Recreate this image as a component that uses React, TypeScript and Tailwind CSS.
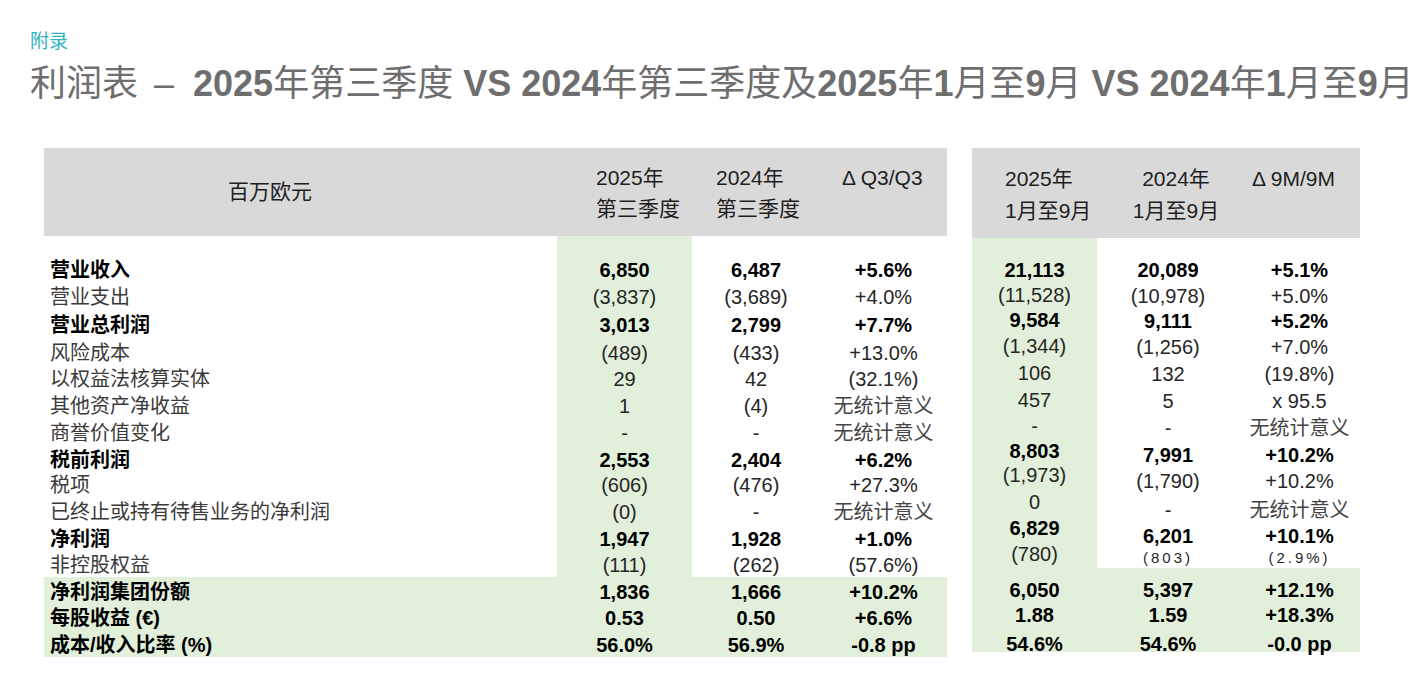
import { clsx } from "clsx";

type Kind = "b" | "r" | "s";
type Val = [string, Kind?];

type LeftRow = {
  label: string;
  bold?: boolean;
  h: string;
  vals: [string, string, string];
};

const LEFT_ROWS: LeftRow[] = [
  { label: "营业收入", bold: true, h: "h-[27px]", vals: ["6,850", "6,487", "+5.6%"] },
  { label: "营业支出", h: "h-[28px]", vals: ["(3,837)", "(3,689)", "+4.0%"] },
  { label: "营业总利润", bold: true, h: "h-[28px]", vals: ["3,013", "2,799", "+7.7%"] },
  { label: "风险成本", h: "h-[26px]", vals: ["(489)", "(433)", "+13.0%"] },
  { label: "以权益法核算实体", h: "h-[27px]", vals: ["29", "42", "(32.1%)"] },
  { label: "其他资产净收益", h: "h-[27px]", vals: ["1", "(4)", "无统计意义"] },
  { label: "商誉价值变化", h: "h-[27px]", vals: ["-", "-", "无统计意义"] },
  { label: "税前利润", bold: true, h: "h-[25px]", vals: ["2,553", "2,404", "+6.2%"] },
  { label: "税项", h: "h-[27px]", vals: ["(606)", "(476)", "+27.3%"] },
  { label: "已终止或持有待售业务的净利润", h: "h-[27px]", vals: ["(0)", "-", "无统计意义"] },
  { label: "净利润", bold: true, h: "h-[26px]", vals: ["1,947", "1,928", "+1.0%"] },
  { label: "非控股权益", h: "h-[27px]", vals: ["(111)", "(262)", "(57.6%)"] },
];

const LEFT_TOTALS: LeftRow[] = [
  { label: "净利润集团份额", bold: true, h: "h-[26px]", vals: ["1,836", "1,666", "+10.2%"] },
  { label: "每股收益 (€)", bold: true, h: "h-[27px]", vals: ["0.53", "0.50", "+6.6%"] },
  { label: "成本/收入比率 (%)", bold: true, h: "h-[27px]", vals: ["56.0%", "56.9%", "-0.8 pp"] },
];

// right block: first column sits on its own rhythm, the other two share rows
const RIGHT_COL1_H = ["h-[25px]", "h-[25px]", "h-[26px]", "h-[26px]", "h-[27px]", "h-[27px]", "h-[26px]", "h-[23px]", "h-[26px]", "h-[28px]", "h-[24px]", "h-[28px]"];
const RIGHT_COL1: Val[] = [
  ["21,113", "b"], ["(11,528)"], ["9,584", "b"], ["(1,344)"], ["106"], ["457"],
  ["-"], ["8,803", "b"], ["(1,973)"], ["0"], ["6,829", "b"], ["(780)"],
];

const RIGHT_ROW_H = ["h-[26px]", "h-[25px]", "h-[26px]", "h-[26px]", "h-[27px]", "h-[27px]", "h-[28px]", "h-[25px]", "h-[28px]", "h-[29px]", "h-[24px]", "h-[20px]"];
const RIGHT_COL2: Val[] = [
  ["20,089", "b"], ["(10,978)"], ["9,111", "b"], ["(1,256)"], ["132"], ["5"],
  ["-"], ["7,991", "b"], ["(1,790)"], ["-"], ["6,201", "b"], ["(803)", "s"],
];
const RIGHT_COL3: Val[] = [
  ["+5.1%", "b"], ["+5.0%"], ["+5.2%", "b"], ["+7.0%"], ["(19.8%)"], ["x 95.5"],
  ["无统计意义"], ["+10.2%", "b"], ["+10.2%"], ["无统计意义"], ["+10.1%", "b"], ["(2.9%)", "s"],
];

const RIGHT_TOTALS: [string, string, string, string][] = [
  ["h-[25px]", "6,050", "5,397", "+12.1%"],
  ["h-[26px]", "1.88", "1.59", "+18.3%"],
  ["h-[26px] pt-[3px]", "54.6%", "54.6%", "-0.0 pp"],
];

function Value({ text, kind = "r" }: { text: string; kind?: Kind }) {
  if (text === "无统计意义") {
    return <span className="text-[20px] text-[#444]">{text}</span>;
  }
  return (
    <span
      className={clsx(
        "whitespace-nowrap",
        kind === "b" && "text-[20px] font-bold text-black",
        kind === "r" && "text-[20px] text-[#262626]",
        kind === "s" && "text-[15px] tracking-[3px] text-[#262626]",
      )}
    >
      {text}
    </span>
  );
}

function LeftPanel() {
  return (
    <div className="flex w-[903px] flex-col">
      <div className="grid h-[88px] grid-cols-[513px_135px_128px_127px] bg-[#d9d9d9] text-[21px] text-[#1e1e1e]">
        <div className="flex items-center justify-center pr-[61px]">百万欧元</div>
        <div className="pl-[39px] pt-[14px] leading-[31px]">
          <div>2025年</div>
          <div>第三季度</div>
        </div>
        <div className="pl-[24px] pt-[14px] leading-[31px]">
          <div>2024年</div>
          <div>第三季度</div>
        </div>
        <div className="pl-[22px] pt-[14px] leading-[31px]">Δ Q3/Q3</div>
      </div>

      <div className="grid h-[19px] grid-cols-[513px_135px_128px_127px]">
        <div />
        <div className="bg-[#e2efda]" />
      </div>

      {LEFT_ROWS.map((row) => (
        <div key={row.label} className={clsx("grid grid-cols-[513px_135px_128px_127px]", row.h)}>
          <div
            className={clsx(
              "flex items-center pl-[6px] text-[20px]",
              row.bold ? "font-bold text-black" : "text-[#3a3a3a]",
            )}
          >
            {row.label}
          </div>
          {row.vals.map((v, i) => (
            <div
              key={i}
              className={clsx("flex items-center justify-center", i === 0 && "bg-[#e2efda]")}
            >
              <Value text={v} kind={row.bold ? "b" : "r"} />
            </div>
          ))}
        </div>
      ))}

      <div className="bg-[#e2efda]">
        {LEFT_TOTALS.map((row) => (
          <div key={row.label} className={clsx("grid grid-cols-[513px_135px_128px_127px]", row.h)}>
            <div className="flex items-center pl-[6px] text-[20px] font-bold text-black">
              {row.label}
            </div>
            {row.vals.map((v, i) => (
              <div key={i} className="flex items-center justify-center">
                <Value text={v} kind="b" />
              </div>
            ))}
          </div>
        ))}
      </div>
    </div>
  );
}

function RightColumn({ vals, heights, className }: { vals: Val[]; heights: string[]; className?: string }) {
  return (
    <div className={clsx("flex flex-col pt-[19px]", className)}>
      {vals.map(([text, kind], i) => (
        <div key={i} className={clsx("flex items-center justify-center", heights[i])}>
          <Value text={text} kind={kind} />
        </div>
      ))}
    </div>
  );
}

function RightPanel() {
  return (
    <div className="flex w-[388px] flex-col">
      <div className="grid h-[90px] grid-cols-[125px_142px_121px] bg-[#d9d9d9] text-[21px] text-[#1e1e1e]">
        <div className="pl-[33px] pt-[15px] leading-[32px]">
          <div>2025年</div>
          <div>1月至9月</div>
        </div>
        <div className="pl-[16px] pt-[15px] text-center leading-[32px]">
          <div>2024年</div>
          <div>1月至9月</div>
        </div>
        <div className="pl-[13px] pt-[15px] leading-[32px]">Δ 9M/9M</div>
      </div>

      <div className="grid h-[330px] grid-cols-[125px_142px_121px]">
        <RightColumn vals={RIGHT_COL1} heights={RIGHT_COL1_H} className="bg-[#e2efda]" />
        <RightColumn vals={RIGHT_COL2} heights={RIGHT_ROW_H} />
        <RightColumn vals={RIGHT_COL3} heights={RIGHT_ROW_H} />
      </div>

      <div className="bg-[#e2efda] pt-[7px]">
        {RIGHT_TOTALS.map(([h, a, b, c]) => (
          <div key={a + c} className={clsx("grid grid-cols-[125px_142px_121px]", h)}>
            <div className="flex items-center justify-center"><Value text={a} kind="b" /></div>
            <div className="flex items-center justify-center"><Value text={b} kind="b" /></div>
            <div className="flex items-center justify-center"><Value text={c} kind="b" /></div>
          </div>
        ))}
      </div>
    </div>
  );
}

export default function App() {
  return (
    <div className="h-[684px] w-[1413px] overflow-hidden bg-white font-['Liberation_Sans','Noto_Sans_CJK_SC',sans-serif]">
      <div className="pl-[30px] pt-[30px] text-[19px] leading-[24px] text-[#31b2c2]">附录</div>

      <h1 className="mt-[8px] whitespace-nowrap pl-[30px] text-[36px] leading-[44px] font-normal text-[#6e6e6e]">
        <span>利润表</span>
        <span className="ml-[16px] mr-[19px]">–</span>
        <b>2025</b>年第三季度<b> VS 2024</b>年第三季度及<b>2025</b>年<b>1</b>月至<b>9</b>月
        <b> VS 2024</b>年<b>1</b>月至<b>9</b>月
      </h1>

      <div className="mt-[42px] flex gap-[25px] pl-[44px]">
        <LeftPanel />
        <RightPanel />
      </div>
    </div>
  );
}
